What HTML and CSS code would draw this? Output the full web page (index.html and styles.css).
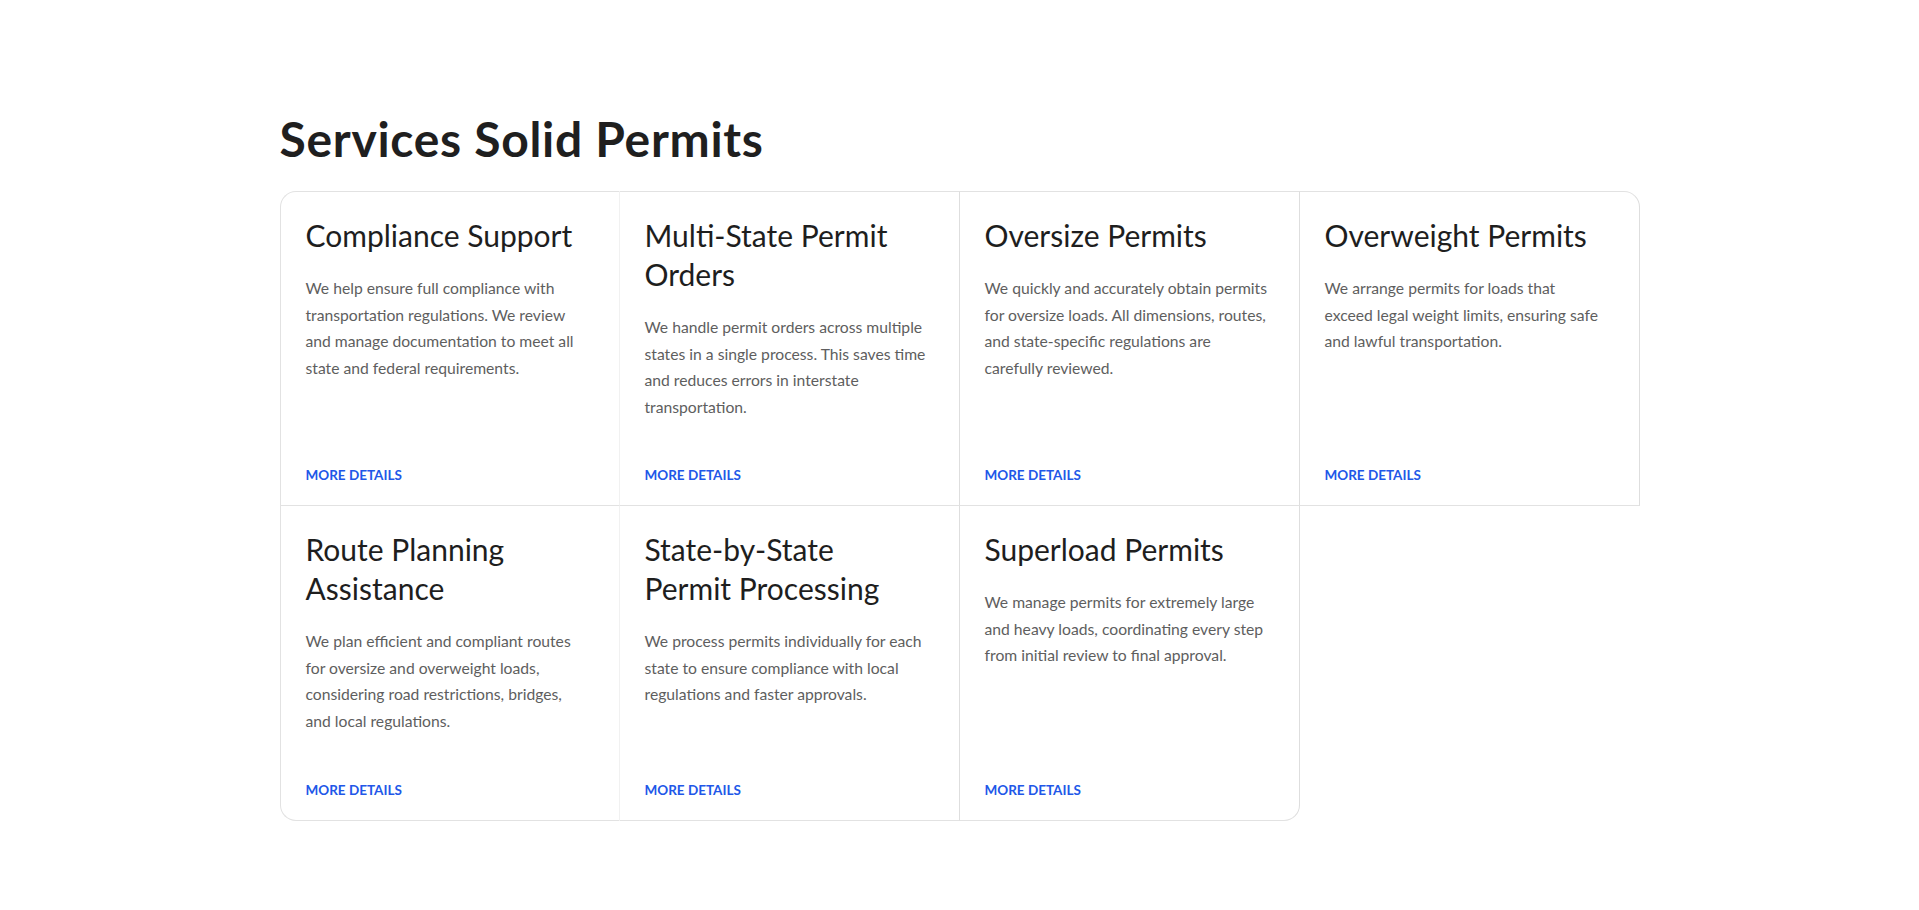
FILE: index.html
```html
<!DOCTYPE html>
<html lang="en">
<head>
<meta charset="utf-8">
<title>Services Solid Permits</title>
<link rel="stylesheet" href="styles.css">
</head>
<body>
<section class="services">
  <h1 class="services__title">Services Solid Permits</h1>
  <div class="grid">
    <article class="card">
      <h2 class="card__title">Compliance Support</h2>
      <p class="card__text">We help ensure full compliance with transportation regulations. We review and manage documentation to meet all state and federal requirements.</p>
      <a class="card__link" href="#">MORE DETAILS</a>
    </article>
    <article class="card">
      <h2 class="card__title">Multi-State Permit Orders</h2>
      <p class="card__text">We handle permit orders across multiple states in a single process. This saves time and reduces errors in interstate transportation.</p>
      <a class="card__link" href="#">MORE DETAILS</a>
    </article>
    <article class="card">
      <h2 class="card__title">Oversize Permits</h2>
      <p class="card__text">We quickly and accurately obtain permits for oversize loads. All dimensions, routes, and state-specific regulations are carefully reviewed.</p>
      <a class="card__link" href="#">MORE DETAILS</a>
    </article>
    <article class="card">
      <h2 class="card__title">Overweight Permits</h2>
      <p class="card__text">We arrange permits for loads that<br>exceed legal weight limits, ensuring safe and lawful transportation.</p>
      <a class="card__link" href="#">MORE DETAILS</a>
    </article>
    <article class="card">
      <h2 class="card__title">Route Planning Assistance</h2>
      <p class="card__text">We plan efficient and compliant routes for oversize and overweight loads, considering road restrictions, bridges, and local regulations.</p>
      <a class="card__link" href="#">MORE DETAILS</a>
    </article>
    <article class="card">
      <h2 class="card__title">State-by-State<br>Permit Processing</h2>
      <p class="card__text">We process permits individually for each state to ensure compliance with local regulations and faster approvals.</p>
      <a class="card__link" href="#">MORE DETAILS</a>
    </article>
    <article class="card">
      <h2 class="card__title">Superload Permits</h2>
      <p class="card__text">We manage permits for extremely large and heavy loads, coordinating every step from initial review to final approval.</p>
      <a class="card__link" href="#">MORE DETAILS</a>
    </article>
  </div>
</section>
</body>
</html>
```
FILE: styles.css
```css
* { box-sizing: border-box; }
html, body { margin: 0; padding: 0; background: #fff; }
body {
  font-family: "Lato", "Noto Sans", sans-serif;
  color: #1c1c1c;
}
.services {
  width: 1360px;
  margin: 0 auto;
  padding-top: 108px;
}
.services__title {
  margin: 0 0 21px;
  font-size: 48px;
  line-height: 62px;
  font-weight: 700;
  color: #1f1f1f;
  letter-spacing: 0.7px;
}
.grid {
  display: grid;
  grid-template-columns: repeat(4, 1fr);
}
.card {
  display: flex;
  flex-direction: column;
  min-height: 315px;
  padding: 24px 30px 21px 25px;
  border-right: 1px solid #dedede;
  border-bottom: 1px solid #e2e2e2;
}
.card:nth-child(-n+4) { border-top: 1px solid #e2e2e2; }
.card:nth-child(4n+1) { border-left: 1px solid #e2e2e2; border-right-color: #f1f1f1; }
.card:nth-child(1) { border-top-left-radius: 16px; }
.card:nth-child(4) { border-top-right-radius: 16px; }
.card:nth-child(5) { border-bottom-left-radius: 16px; }
.card:nth-child(7) { border-bottom-right-radius: 16px; }
.card__title {
  margin: 0 0 20px;
  font-size: 30px;
  line-height: 39px;
  font-weight: 400;
  color: #1e1e1e;
}
.card__text {
  margin: 0;
  font-size: 15.7px;
  line-height: 26.5px;
  font-weight: 400;
  color: #5e5e5e;
}
.card__link {
  margin-top: auto;
  font-size: 13.5px;
  line-height: 18px;
  font-weight: 700;
  color: #2157e8;
  text-decoration: none;
}
```
